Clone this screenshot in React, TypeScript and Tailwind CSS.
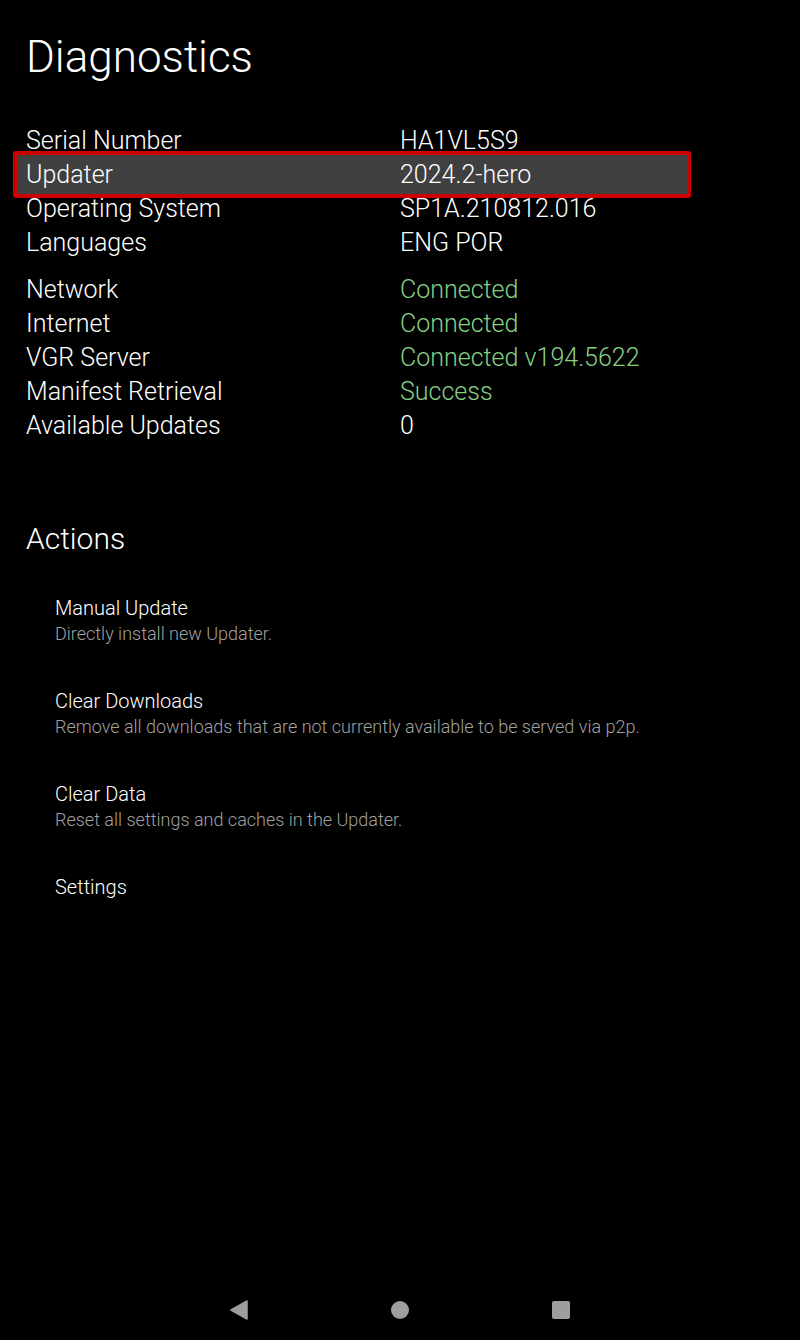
import React from "react";

const green = "text-[#86d086]";

function Row({ label, value, valueClass = "text-white", highlight = false }: { label: string; value: string; valueClass?: string; highlight?: boolean }) {
  return (
    <div className="relative flex h-[34px] items-center">
      {highlight && (
        <div className="absolute left-[-13px] top-[-7px] h-[47px] w-[678px] rounded-[3px] border-[4px] border-[#cc0000] bg-[#404040]" />
      )}
      <div className="relative w-[374px] text-white">{label}</div>
      <div className={`relative ${valueClass}`}>{value}</div>
    </div>
  );
}

function Action({ title, desc }: { title: string; desc?: string }) {
  return (
    <div className="flex h-[93px] flex-col">
      <div className="text-[20px] leading-[28px] text-white">{title}</div>
      {desc && <div className="text-[18px] leading-[24px] text-[#a0a0a0]">{desc}</div>}
    </div>
  );
}

export default function App() {
  return (
    <div
      className="relative flex h-[1340px] w-[800px] flex-col bg-black font-light"
      style={{ fontFamily: "Roboto, 'Noto Sans', sans-serif" }}
    >
      <div className="px-[26px] pt-[31px]">
        <h1 className="text-[44px] leading-[52px] text-white">Diagnostics</h1>
        <div className="mt-[41px] text-[25px] leading-[34px]">
          <Row label="Serial Number" value="HA1VL5S9" />
          <Row label="Updater" value="2024.2-hero" highlight />
          <Row label="Operating System" value="SP1A.210812.016" />
          <Row label="Languages" value="ENG POR" />
          <div className="h-[13px]" />
          <Row label="Network" value="Connected" valueClass={green} />
          <Row label="Internet" value="Connected" valueClass={green} />
          <Row label="VGR Server" value="Connected v194.5622" valueClass={green} />
          <Row label="Manifest Retrieval" value="Success" valueClass={green} />
          <Row label="Available Updates" value="0" />
        </div>
        <h2 className="mt-[78px] text-[30px] leading-[36px] text-white">Actions</h2>
        <div className="mt-[37px] pl-[29px]">
          <Action title="Manual Update" desc="Directly install new Updater." />
          <Action title="Clear Downloads" desc="Remove all downloads that are not currently available to be served via p2p." />
          <Action title="Clear Data" desc="Reset all settings and caches in the Updater." />
          <Action title="Settings" />
        </div>
      </div>
      <div className="mt-auto flex h-[60px] items-center justify-center gap-[141px]">
        <svg width="20" height="20" viewBox="0 0 20 20">
          <path d="M18 1 L2 10 L18 19 Z" fill="#9e9e9e" stroke="#9e9e9e" strokeWidth="1.5" strokeLinejoin="round" />
        </svg>
        <svg width="20" height="20" viewBox="0 0 20 20">
          <circle cx="10" cy="10" r="9" fill="#9e9e9e" />
        </svg>
        <svg width="20" height="20" viewBox="0 0 20 20">
          <rect x="1" y="1" width="18" height="18" rx="2" fill="#9e9e9e" />
        </svg>
      </div>
    </div>
  );
}
